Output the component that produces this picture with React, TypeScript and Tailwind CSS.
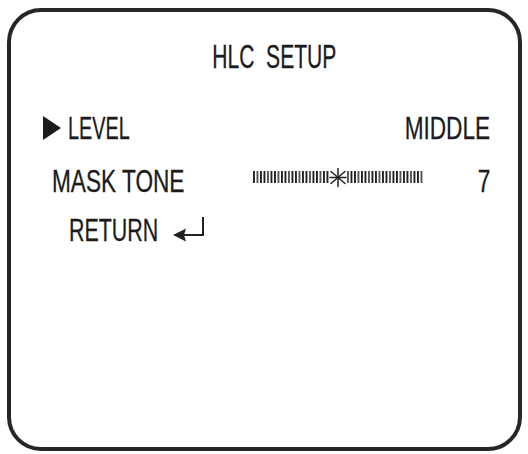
const font = "font-['Liberation_Sans','Arial',sans-serif]";

function Slider() {
  const left = Array.from({ length: 22 }, (_, i) => i * 3.5);
  const right = Array.from({ length: 22 }, (_, i) => 94 + i * 3.5);
  return (
    <svg width="170" height="20" viewBox="0 0 170 20" className="block">
      {[...left, ...right].map((x, i) => (
        <rect key={i} x={x} y="3" width="1.9" height="12" fill={i % 3 === 1 ? "#555" : "#222"} />
      ))}
      <g stroke="#222" strokeWidth="1.5" strokeLinecap="round">
        <line x1="85" y1="0.5" x2="85" y2="18.5" />
        <line x1="78" y1="3.5" x2="92" y2="15.5" />
        <line x1="92" y1="3.5" x2="78" y2="15.5" />
        <line x1="77" y1="9.5" x2="93" y2="9.5" />
      </g>
    </svg>
  );
}

function ReturnArrow() {
  return (
    <svg width="34" height="28" viewBox="0 0 34 28" className="block">
      <path d="M30 1 V19 H10" fill="none" stroke="#222" strokeWidth="2" />
      <path d="M0 19 L13 12.5 L11 19 L13 25.5 Z" fill="#222" />
    </svg>
  );
}

export default function App() {
  return (
    <div className={`w-[528px] h-[454px] bg-white pt-[8px] pl-[7px] ${font} text-[#1c1c1c] [-webkit-text-stroke:0.3px_#1c1c1c]`}>
      <div className="w-[515px] h-[443px] border-4 border-[#262626] rounded-[34px] flex flex-col text-[31px] leading-[31px]">
        <div className="mt-[29px] flex justify-center pl-5">
          <span className="inline-block scale-x-[0.68] scale-y-[1.05] origin-center whitespace-pre">HLC  SETUP</span>
        </div>

        <div className="mt-[41px] flex items-start justify-between pl-[32px] pr-[28px]">
          <div className="flex items-start">
            <svg width="18" height="24" viewBox="0 0 18 24" className="block mt-[3px]">
              <polygon points="0,0 18,12 0,24" fill="#1c1c1c" />
            </svg>
            <span className="ml-[7px] inline-block scale-x-[0.64] origin-left">LEVEL</span>
          </div>
          <span className="inline-block scale-x-[0.73] origin-right">MIDDLE</span>
        </div>

        <div className="mt-[22px] flex items-start pl-[41px] pr-[28px]">
          <div className="w-[201px] shrink-0">
            <span className="inline-block scale-x-[0.73] origin-left whitespace-pre">MASK TONE</span>
          </div>
          <div className="mt-[2px]">
            <Slider />
          </div>
          <div className="flex-1 text-right">
            <span className="inline-block scale-x-[0.73] origin-right">7</span>
          </div>
        </div>

        <div className="mt-[18px] flex items-start pl-[58px]">
          <div className="w-[104px] shrink-0">
            <span className="inline-block scale-x-[0.69] origin-left">RETURN</span>
          </div>
          <div className="mt-[1px]">
            <ReturnArrow />
          </div>
        </div>
      </div>
    </div>
  );
}
